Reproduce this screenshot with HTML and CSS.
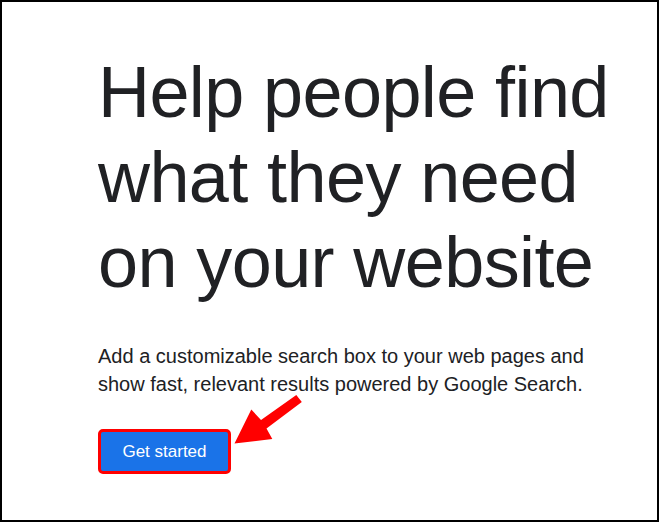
FILE: index.html
```html
<!DOCTYPE html>
<html lang="en">
<head>
<meta charset="utf-8">
<title>Programmable Search</title>
<link rel="stylesheet" href="styles.css">
</head>
<body>
<div class="frame">
  <main class="hero">
    <h1 class="title">Help people find what they need on your website</h1>
    <p class="lead">Add a customizable search box to your web pages and show fast, relevant results powered by Google Search.</p>
    <div class="cta-row">
      <a class="cta" href="#">Get started</a>
    </div>
  </main>
  <svg class="arrow" width="80" height="60" viewBox="228 390 80 60" aria-hidden="true">
    <polygon points="234.5,443.5 251.3,409.5 261,420 296.3,395 301.8,402 266.5,428.5 272.3,439" fill="#ff0000"/>
  </svg>
</div>
</body>
</html>
```
FILE: styles.css
```css
html, body {
  margin: 0;
  padding: 0;
  background: #ffffff;
}

.frame {
  position: relative;
  box-sizing: border-box;
  width: 659px;
  height: 522px;
  border: 2px solid #000000;
  background: #ffffff;
  overflow: hidden;
}

.hero {
  padding: 48px 20px 0 96px;
  font-family: "Liberation Sans", Arial, sans-serif;
  color: #202124;
}

.title {
  margin: 0;
  font-size: 72px;
  line-height: 85px;
  font-weight: 400;
  letter-spacing: -0.6px;
  width: 540px;
}

.lead {
  margin: 37px 0 0 0;
  font-size: 20px;
  line-height: 28px;
  width: 500px;
}

.cta-row {
  display: flex;
  margin-top: 31px;
}

.cta {
  display: block;
  box-sizing: border-box;
  width: 133px;
  height: 45px;
  border: 3px solid #ff0000;
  border-radius: 5px;
  background: #1a73e8;
  color: #ffffff;
  font-size: 17px;
  line-height: 39px;
  text-align: center;
  text-decoration: none;
}

.arrow {
  position: absolute;
  left: 226px;
  top: 388px;
}
```
